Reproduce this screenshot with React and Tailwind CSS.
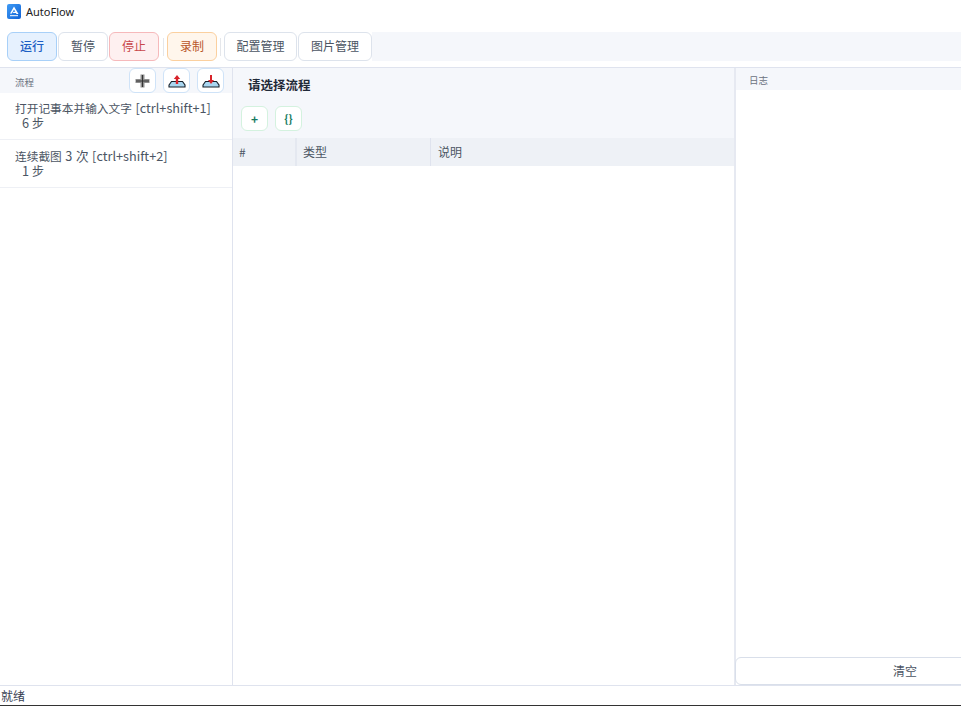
const font = { fontFamily: '"Noto Sans CJK SC", "Inter", sans-serif' };

function ToolBtn({ className, children }) {
  return (
    <button className={`h-[29px] pb-[2px] rounded-[6px] border text-[12px] flex items-center justify-center ${className}`}>
      {children}
    </button>
  );
}

function PlusIcon() {
  return (
    <svg width="15" height="14" viewBox="0 0 15 14">
      <path d="M5.500 0.500h4v4.500h5v4h-5v4.500h-4V9h-5V5h5z" fill="#8f8f8f" />
      <path d="M7.500 1v12M1 7h13" stroke="#333" strokeWidth="1" />
    </svg>
  );
}

function TrayIcon({ down }) {
  return (
    <svg width="18" height="14" viewBox="0 0 18 14">
      <path d="M1 11 3.500 7.500h11L17 11v2H1z" fill="#a9d6f0" stroke="#16202b" strokeWidth="1.100" />
      {down ? (
        <path d="M8 1h2v5h2L9 10 6 6h2z" fill="#d8232a" />
      ) : (
        <path d="M9 1l3.200 4H10.200v5H7.800V5H5.800z" fill="#d8232a" />
      )}
    </svg>
  );
}

function IconBtn({ children }) {
  return (
    <button className="w-[27px] h-[25px] rounded-[6px] border border-[#cfe3f8] bg-white flex items-center justify-center">
      {children}
    </button>
  );
}

function Row({ h, pt, title, rest, steps, step }) {
  return (
    <div className={`${h} ${pt} border-b border-[#eef0f5] pl-[15px] text-[12.700px] leading-[15px] text-[#4b5563]`}>
      <div className="whitespace-pre [word-spacing:0.700px]"><span className="text-[11.700px]">{title}</span>{rest}</div>
      <div className="pl-[7px] whitespace-pre">{steps} <span className="text-[12px]">{step}</span></div>
    </div>
  );
}

export default function App() {
  return (
    <div style={font} className="w-[961px] h-[706px] bg-white flex flex-col overflow-hidden">
      <div className="h-[22px] flex items-center pl-[7px] gap-[5px] shrink-0">
        <svg width="14" height="15" viewBox="0 0 14 15">
          <defs>
            <linearGradient id="logo" x1="0" y1="0" x2="1" y2="1">
              <stop offset="0" stopColor="#3f9bf5" />
              <stop offset="1" stopColor="#0f62d6" />
            </linearGradient>
          </defs>
          <rect width="14" height="15" rx="2" fill="url(#logo)" />
          <path d="M7 2.500 3 9.500h1.800L7 5.500l1.300 2.300H6.500L5.800 9h3.100l.6 1H11.500z" fill="#fff" />
          <path d="M3 11.700h8" stroke="#fff" strokeWidth="1" />
        </svg>
        <span className="text-[11px] text-[#222] leading-none" style={{ fontFamily: '"Noto Sans", sans-serif' }}>AutoFlow</span>
      </div>
      <div className="h-[45px] shrink-0 flex pt-[10px]">
        <div className="flex items-start pl-[7px] gap-[1px]">
          <ToolBtn className="w-[50px] border-[#a8d0f8] bg-[#e6f1fe] text-[#1d5fc4] font-medium">运行</ToolBtn>
          <ToolBtn className="w-[50px] border-[#dde3ec] bg-white text-[#4b5563]">暂停</ToolBtn>
          <ToolBtn className="w-[50px] border-[#f6b9bb] bg-[#fef0f0] text-[#c8474a]">停止</ToolBtn>
          <div className="w-[1px] h-[18px] mt-[6px] mx-[2.500px] bg-[#e5e7eb]" />
          <ToolBtn className="w-[50px] border-[#fbd09f] bg-[#fff6ec] text-[#b9562a]">录制</ToolBtn>
          <div className="w-[1px] h-[18px] mt-[6px] mx-[2px] bg-[#e5e7eb]" />
          <ToolBtn className="w-[73px] border-[#dde3ec] bg-white text-[#4b5563]">配置管理</ToolBtn>
          <ToolBtn className="w-[74px] border-[#dde3ec] bg-white text-[#4b5563]">图片管理</ToolBtn>
        </div>
        <div className="flex-1 h-[29px] bg-[#f5f7fb]" />
      </div>
      <div className="flex-1 flex border-t border-b border-[#dfe3ee] min-h-0">
        <div className="w-[233px] shrink-0 border-r border-[#dfe3ee] flex flex-col">
          <div className="h-[25px] bg-[#f5f7fb] flex items-center justify-between pl-[15px] pr-[8px] shrink-0">
            <span className="text-[9.500px] text-[#6b7280] mt-[3px]">流程</span>
            <div className="flex gap-[7px]">
              <IconBtn><PlusIcon /></IconBtn>
              <IconBtn><TrayIcon /></IconBtn>
              <IconBtn><TrayIcon down /></IconBtn>
            </div>
          </div>
          <Row h="h-[47px]" pt="pt-[7px]" title="打开记事本并输入文字" rest=" [ctrl+shift+1]" steps="6" step="步" />
          <Row h="h-[48px]" pt="pt-[8px]" title="连续截图" rest=" 3 次 [ctrl+shift+2]" steps="1" step="步" />
        </div>
        <div className="w-[501px] shrink-0 flex flex-col">
          <div className="h-[70px] bg-[#f5f7fb] shrink-0 flex flex-col">
            <div className="pl-[15px] pt-[8px] text-[12.500px] leading-[18px] font-semibold text-[#1f2937]">请选择流程</div>
            <div className="flex gap-[7px] pl-[8px] pt-[12px]">
              <button className="w-[27px] h-[25px] rounded-[6px] border border-[#d4f2df] bg-white text-[12px] font-bold text-[#167a5f] flex items-center justify-center">+</button>
              <button className="w-[27px] h-[25px] rounded-[6px] border border-[#d4f2df] bg-white text-[11px] font-bold text-[#167a5f] flex items-center justify-center">{"{}"}</button>
            </div>
          </div>
          <div className="h-[28px] bg-[#eef1f6] flex text-[12px] text-[#4b5563] shrink-0">
            <div className="w-[64px] border-r-2 border-[#e4e8f0] pl-[6px] flex items-center">#</div>
            <div className="w-[134px] border-r border-[#dfe3ee] pl-[6px] flex items-center">类型</div>
            <div className="flex-1 pl-[7px] flex items-center">说明</div>
          </div>
        </div>
        <div className="flex-1 border-l-2 border-[#e6e9f1] flex flex-col min-w-0">
          <div className="h-[22px] bg-[#f5f7fb] pl-[13px] pt-[2px] flex items-center text-[9.500px] text-[#6b7280] shrink-0">日志</div>
          <div className="flex-1" />
          <button className="h-[28px] -ml-[1px] mr-[-114px] rounded-[6px] border border-[#d9dfea] bg-white text-[12px] text-[#4b5563] shrink-0">清空</button>
        </div>
      </div>
      <div className="h-[20px] shrink-0 text-[12px] leading-[20px] pl-[1px] text-[#374151] border-b border-[#333]">就绪</div>
    </div>
  );
}
